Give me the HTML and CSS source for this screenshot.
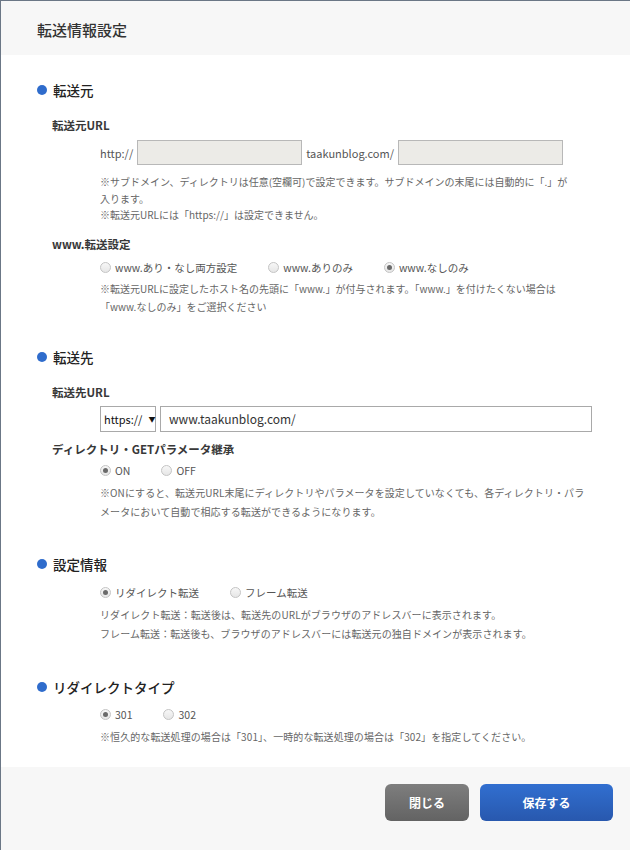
FILE: index.html
```html
<!DOCTYPE html>
<html lang="ja">
<head>
<meta charset="utf-8">
<link rel="stylesheet" href="styles.css">
</head>
<body>
<div class="page">
  <header class="header"><h1 class="title">転送情報設定</h1></header>
  <main class="content">
    <section class="section">
      <h2 class="sec-title"><span class="bullet"></span>転送元</h2>
      <h3 class="label label-first">転送元URL</h3>
      <div class="indent url-row">
        <span class="prefix">http://</span>
        <span class="field field-gray"></span>
        <span class="prefix">taakunblog.com/</span>
        <span class="field field-gray"></span>
      </div>
      <p class="indent note note-a">※サブドメイン、ディレクトリは任意(空欄可)で設定できます。サブドメインの末尾には自動的に「.」が<br>入ります。<br>※転送元URLには「https://」は設定できません。</p>
      <h3 class="label label-www">www.転送設定</h3>
      <div class="indent radios radios-www">
        <span class="radio"><span class="dot"></span>www.あり・なし両方設定</span>
        <span class="radio"><span class="dot"></span>www.ありのみ</span>
        <span class="radio checked"><span class="dot"></span>www.なしのみ</span>
      </div>
      <p class="indent note note-b">※転送元URLに設定したホスト名の先頭に「www.」が付与されます。「www.」を付けたくない場合は<br>「www.なしのみ」をご選択ください</p>
    </section>

    <section class="section sec-2">
      <h2 class="sec-title"><span class="bullet"></span>転送先</h2>
      <h3 class="label label-first">転送先URL</h3>
      <div class="indent dest-row">
        <span class="select">https://<span class="caret">▼</span></span>
        <span class="field field-white">www.taakunblog.com/</span>
      </div>
      <h3 class="label label-dir">ディレクトリ・GETパラメータ継承</h3>
      <div class="indent radios radios-on">
        <span class="radio checked"><span class="dot"></span>ON</span>
        <span class="radio"><span class="dot"></span>OFF</span>
      </div>
      <p class="indent note note-c">※ONにすると、転送元URL末尾にディレクトリやパラメータを設定していなくても、各ディレクトリ・パラ<br>メータにおいて自動で相応する転送ができるようになります。</p>
    </section>

    <section class="section sec-3">
      <h2 class="sec-title"><span class="bullet"></span>設定情報</h2>
      <div class="indent radios radios-mode">
        <span class="radio checked"><span class="dot"></span>リダイレクト転送</span>
        <span class="radio"><span class="dot"></span>フレーム転送</span>
      </div>
      <p class="indent note note-c">リダイレクト転送：転送後は、転送先のURLがブラウザのアドレスバーに表示されます。<br>フレーム転送：転送後も、ブラウザのアドレスバーには転送元の独自ドメインが表示されます。</p>
    </section>

    <section class="section sec-4">
      <h2 class="sec-title"><span class="bullet"></span>リダイレクトタイプ</h2>
      <div class="indent radios radios-mode">
        <span class="radio checked"><span class="dot"></span>301</span>
        <span class="radio"><span class="dot"></span>302</span>
      </div>
      <p class="indent note note-c">※恒久的な転送処理の場合は「301」、一時的な転送処理の場合は「302」を指定してください。</p>
    </section>
  </main>
  <footer class="footer">
    <button class="btn btn-close">閉じる</button>
    <button class="btn btn-save">保存する</button>
  </footer>
</div>
</body>
</html>
```

FILE: styles.css
```css
* { box-sizing: border-box; }
html, body { margin: 0; padding: 0; background: #fff; }
body {
  font-family: "Noto Sans CJK JP", "Noto Sans", sans-serif;
  color: #333;
}
.page {
  width: 630px;
  height: 850px;
  border-top: 1px solid #6b7786;
  border-left: 1px solid #6b7786;
  display: flex;
  flex-direction: column;
  overflow: hidden;
}
.header {
  height: 54px;
  background: #f7f7f7;
  display: flex;
  align-items: center;
  padding-left: 36px;
  flex-shrink: 0;
}
.title {
  margin: 0;
  font-size: 15px;
  font-weight: 500;
  color: #333;
  line-height: 20px;
  padding-top: 3px;
}
.content {
  padding: 25px 0 0 0;
  flex: 1;
}
.section { margin: 0; }
.sec-2 { margin-top: 31px; }
.sec-3 { margin-top: 33px; }
.sec-4 { margin-top: 34px; }
.sec-title {
  margin: 0;
  display: flex;
  align-items: center;
  padding-left: 36px;
  font-size: 13.5px;
  font-weight: 500;
  line-height: 20px;
  height: 20px;
  color: #222;
}
.bullet {
  width: 10px;
  height: 10px;
  border-radius: 50%;
  background: #2f6ccc;
  margin-right: 6px;
}
.label {
  margin: 0;
  padding-left: 51px;
  font-size: 11.5px;
  font-weight: 700;
  line-height: 20px;
  height: 20px;
  color: #383838;
}
.label-first { margin-top: 15px; }
.label-www { margin-top: 10px; }
.label-dir { margin-top: 7px; }
.indent { padding-left: 99px; }
.url-row {
  margin-top: 5px;
  display: flex;
  align-items: center;
  gap: 4px;
  height: 25px;
}
.prefix {
  font-size: 11px;
  color: #555;
}
.field {
  display: block;
  height: 25px;
  border: 1px solid #b8b8b8;
}
.field-gray {
  width: 165px;
  background: #ecebe7;
}
.note {
  margin: 0;
  font-size: 10px;
  line-height: 17px;
  color: #666;
  white-space: nowrap;
}
.note-a { margin-top: 9px; line-height: 16.5px; }
.note-b { margin-top: 3px; line-height: 18px; }
.note-c { margin-top: 3px; line-height: 19px; letter-spacing: 0.08px; }
.radios {
  display: flex;
  align-items: center;
  gap: 31px;
  height: 18px;
  font-size: 10.5px;
  color: #555;
}
.radios-www { margin-top: 5px; }
.radios-on { margin-top: 3px; }
.radios-mode { margin-top: 10px; }
.sec-4 .radios-mode { margin-top: 9px; }
.radio {
  display: flex;
  align-items: center;
}
.dot {
  width: 11px;
  height: 11px;
  border-radius: 50%;
  border: 1px solid #c4c4c4;
  background: linear-gradient(#f7f7f7, #e6e6e6);
  margin-right: 4px;
  display: flex;
  align-items: center;
  justify-content: center;
}
.checked .dot::after {
  content: "";
  width: 5px;
  height: 5px;
  border-radius: 50%;
  background: #6a6a6a;
}
.dest-row {
  margin-top: 4px;
  display: flex;
  gap: 4px;
  height: 26px;
}
.select {
  width: 56px;
  height: 26px;
  border: 1px solid #a9a9a9;
  display: flex;
  align-items: center;
  padding-left: 3px;
  font-size: 11px;
  color: #111;
  white-space: nowrap;
}
.caret { font-size: 7px; margin-left: 6px; }
.field-white {
  width: 432px;
  height: 26px;
  border: 1px solid #a9a9a9;
  background: #fff;
  display: flex;
  align-items: center;
  padding-left: 8px;
  font-size: 12px;
  color: #333;
}
.footer {
  height: 83px;
  flex-shrink: 0;
  background: #f7f7f7;
  display: flex;
  justify-content: flex-end;
  align-items: flex-start;
  padding: 17px 17px 0 0;
  gap: 11px;
}
.btn {
  border: none;
  border-radius: 6px;
  height: 37px;
  color: #fff;
  font-family: "Noto Sans CJK JP", sans-serif;
  font-size: 12px;
  font-weight: 700;
}
.btn-close {
  width: 84px;
  background: linear-gradient(#7e7e7e, #636363);
}
.btn-save {
  width: 133px;
  background: linear-gradient(#316fd0, #2858ae);
}
```
